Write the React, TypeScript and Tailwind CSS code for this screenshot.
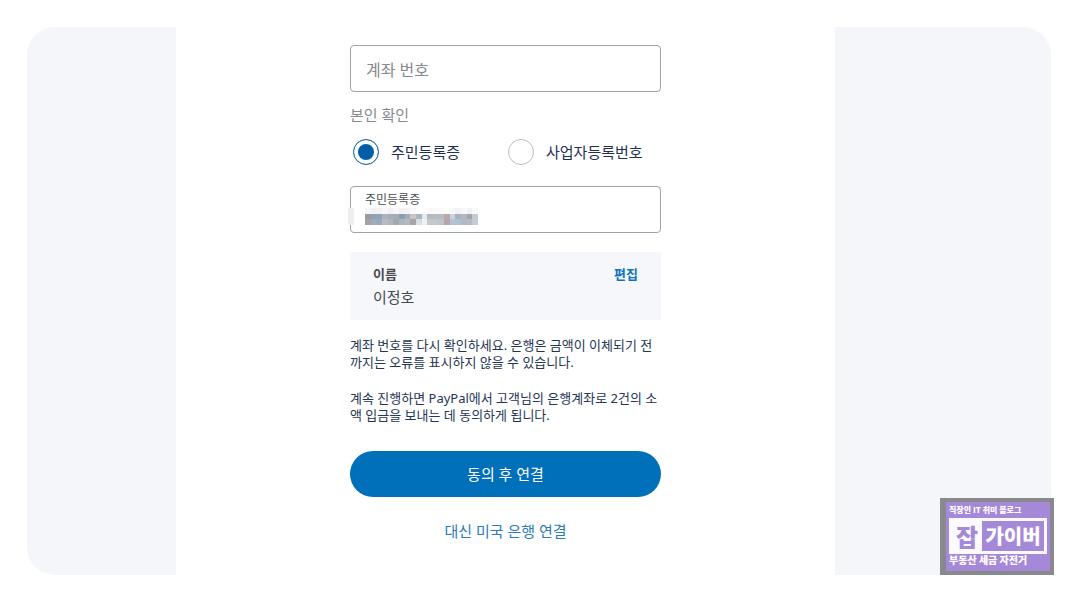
import React from 'react';

const topShades = ['#f6f7f8', '#eff1f3', '#f1f3f4', '#f6f7f8', '#eff1f3', '#f6f7f8', '#f1f2f4', '#f1f3f4', '#f8f8f9', '#ffffff', '#ffffff', '#f8f9f9', '#fafafa', '#fafafb', '#fafafa', '#f8f8f9', '#f1f3f4', '#f6f7f8', '#f0f2f3', '#f8f9f9'];
const midShades = ['#999b9f', '#95a0ae', '#93a3b3', '#a9b3bb', '#a6adb5', '#a6acb4', '#8b9db2', '#a5adb7', '#c5c4c6', '#a9b5c2', '#e4e9ee', '#b5b8bc', '#b7bbc0', '#b7bcc3', '#b7a9ab', '#c9d3dc', '#a5b3c0', '#b1b8c0', '#a3a5a9', '#c4cad4'];
const lowShades = ['#a1a3a8', '#a3abb6', '#98a9bb', '#b6bcc2', '#b5b5b7', '#a4a9b0', '#acb6c1', '#b5b9bf', '#a5a5a9', '#d9dfe6', '#eef1f4', '#c3c8cc', '#c4c8cb', '#bfc4ca', '#b4a6a9', '#b4c2d1', '#b3c1cf', '#b0bac6', '#b5bbc5', '#c5ccd8'];

const MaskedNumber: React.FC = () => (
  <svg width="132" height="18" viewBox="0 0 132 18" shapeRendering="crispEdges" aria-hidden="true">
    <rect x="0" y="0" width="6" height="17" fill="#eeeff0" />
    {[topShades, midShades, lowShades].map((row, r) =>
      row.map((fill, i) => (
        <rect key={`${r}-${i}`} x={17 + i * 5.65} y={r * 5.7} width="5.7" height="5.7" fill={fill} />
      ))
    )}
  </svg>
);

interface IdOptionProps {
  label: string;
  value: string;
  defaultChecked?: boolean;
}

const IdOption: React.FC<IdOptionProps> = ({ label, value, defaultChecked }) => (
  <label className="flex items-center gap-3 text-[15px] leading-5 text-[#1f2f52]">
    <input
      type="radio"
      name="idType"
      value={value}
      defaultChecked={defaultChecked}
      className="size-[26px] shrink-0 appearance-none rounded-full border border-[#b9bcbf] bg-white checked:border-[#2a6fae] checked:bg-[#005ea6] checked:shadow-[inset_0_0_0_4px_#ffffff]"
    />
    {label}
  </label>
);

const BlogBadge: React.FC = () => (
  <div className="absolute -right-[3px] bottom-0 w-[114px] bg-[#88898d] py-1 pr-1 pl-1.5 font-['Noto_Sans_CJK_KR',sans-serif] font-black whitespace-nowrap text-white">
    <div className="flex h-[69px] flex-col bg-[#a688d9] px-[3px]">
      <div className="text-[8px] leading-4">직장인 IT 취미 블로그</div>
      <div className="flex h-9 bg-[#fafaff] p-[3px]">
        <div className="w-[30px] text-center text-[24px] leading-[30px] text-[#a688d9]">잡</div>
        <div className="flex-1 bg-[#a688d9] text-center text-[20px] leading-[30px]">가이버</div>
      </div>
      <div className="text-[10px] leading-3">부동산 세금 자전거</div>
    </div>
  </div>
);

export default function App() {
  return (
    <main className="min-h-screen bg-white p-[27px] font-['Noto_Sans','Noto_Sans_CJK_KR',sans-serif]">
      <div className="relative">
        <div className="grid grid-cols-[149fr_659fr_216fr] rounded-[28px] bg-[#f4f6fa]">
          <form className="col-start-2 bg-white pt-[18px] pb-8" onSubmit={(e) => e.preventDefault()}>
            <div className="mx-auto w-[311px]">
              <input
                type="text"
                aria-label="계좌 번호"
                placeholder="계좌 번호"
                className="block h-[47px] w-full rounded-[4px] border border-[#9da3a6] px-[15px] pt-0.5 text-[16px] placeholder:text-[#85898d]"
              />

              <fieldset>
                <legend className="pt-[11px] text-[15px] leading-6 text-[#85898d]">본인 확인</legend>
                <div className="grid grid-cols-2 gap-0.5 pt-3 pl-[3px]">
                  <IdOption label="주민등록증" value="resident" defaultChecked />
                  <IdOption label="사업자등록번호" value="business" />
                </div>
              </fieldset>

              <div className="relative mt-[21px] h-[47px] rounded-[4px] border border-[#9da3a6] px-3.5">
                <label htmlFor="resident" className="block pt-[5px] text-[12px] leading-4 text-[#4b4f54]">
                  주민등록증
                </label>
                <input id="resident" type="text" className="block h-6 w-full outline-none" />
                <div className="pointer-events-none absolute top-[21px] -left-[3px]">
                  <MaskedNumber />
                </div>
              </div>

              <div className="mt-[19px] flex h-[68px] items-start justify-between bg-[#f5f7fa] px-[23px] pt-3">
                <div className="text-[#45494e]">
                  <div className="text-[13px] leading-5 font-bold">이름</div>
                  <div className="text-[15px] leading-[26px]">이정호</div>
                </div>
                <button type="button" className="text-[13px] leading-5 font-bold text-[#1072ba]">
                  편집
                </button>
              </div>

              <p className="mt-[17px] text-[13px] leading-[17px] whitespace-nowrap text-[#253553]">
                계좌 번호를 다시 확인하세요. 은행은 금액이 이체되기 전
                <br />
                까지는 오류를 표시하지 않을 수 있습니다.
              </p>
              <p className="mt-[19px] text-[13px] leading-[17px] whitespace-nowrap text-[#253553]">
                계속 진행하면 PayPal에서 고객님의 은행계좌로 2건의 소
                <br />
                액 입금을 보내는 데 동의하게 됩니다.
              </p>

              <button type="submit" className="mt-[27px] block h-[46px] w-full rounded-full bg-[#0070ba] text-[15px] text-white">
                동의 후 연결
              </button>
              <a href="#us-bank" className="mt-[22px] block text-center text-[15px] leading-6 text-[#2a7cb8]">
                대신 미국 은행 연결
              </a>
            </div>
          </form>
        </div>
        <BlogBadge />
      </div>
    </main>
  );
}
